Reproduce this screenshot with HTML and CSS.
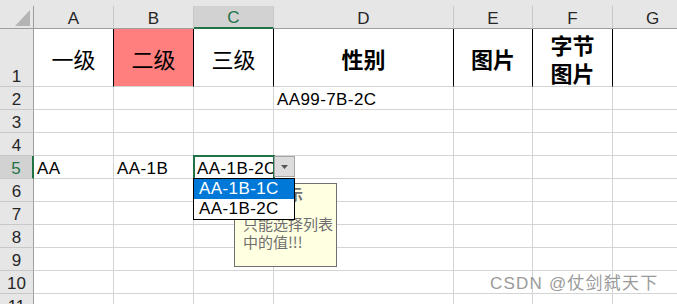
FILE: index.html
```html
<!doctype html>
<html lang="zh-CN">
  <head>
    <meta charset="UTF-8" />
    <meta name="viewport" content="width=device-width, initial-scale=1.0" />
    <title>Sheet1</title>
    <link rel="stylesheet" href="styles.css">
  </head>
  <body>
    <div class="topbar"></div>
    <div class="sheet">
      <!-- column headers -->
      <div class="c h col corner">
        <svg width="15" height="16" viewBox="0 0 15 16"><path d="M15 0V16H0Z" fill="#b4b4b4" /></svg>
      </div>
      <div class="c h col">A</div>
      <div class="c h col">B</div>
      <div class="c h col sel">C</div>
      <div class="c h col">D</div>
      <div class="c h col">E</div>
      <div class="c h col">F</div>
      <div class="c h col">G</div>

      <!-- row 1 -->
      <div class="c h rh">1</div>
      <div class="c title">一级</div>
      <div class="c title red">二级</div>
      <div class="c title">三级</div>
      <div class="c title bold">性别</div>
      <div class="c title bold">图片</div>
      <div class="c title bold">字节<br>图片</div>
      <div class="c"></div>

      <!-- row 2 -->
      <div class="c h rh">2</div>
      <div class="c"></div><div class="c"></div><div class="c"></div>
      <div class="c">AA99-7B-2C</div>
      <div class="c"></div><div class="c"></div><div class="c"></div>

      <!-- row 3 -->
      <div class="c h rh">3</div>
      <div class="c"></div><div class="c"></div><div class="c"></div><div class="c"></div>
      <div class="c"></div><div class="c"></div><div class="c"></div>

      <!-- row 4 -->
      <div class="c h rh">4</div>
      <div class="c"></div><div class="c"></div><div class="c"></div><div class="c"></div>
      <div class="c"></div><div class="c"></div><div class="c"></div>

      <!-- row 5, active cell C5 with validation list -->
      <div class="c h rh sel">5</div>
      <div class="c">AA</div>
      <div class="c">AA-1B</div>
      <div class="c active">
        <span class="clip">AA-1B-2C</span>
        <div class="drop-btn">
          <svg width="7" height="4" viewBox="0 0 7 4"><path d="M0 0H7L3.5 4Z" fill="#555" /></svg>
        </div>
        <div class="tip">
          <div class="tip-title">温馨提示</div>
          <div class="tip-msg">只能选择列表<br>中的值!!!</div>
        </div>
        <div class="drop-list">
          <div class="on">AA-1B-1C</div>
          <div>AA-1B-2C</div>
        </div>
      </div>
      <div class="c"></div><div class="c"></div><div class="c"></div><div class="c"></div>

      <!-- rows 6-11 -->
      <div class="c h rh">6</div>
      <div class="c"></div><div class="c"></div><div class="c"></div><div class="c"></div>
      <div class="c"></div><div class="c"></div><div class="c"></div>

      <div class="c h rh">7</div>
      <div class="c"></div><div class="c"></div><div class="c"></div><div class="c"></div>
      <div class="c"></div><div class="c"></div><div class="c"></div>

      <div class="c h rh">8</div>
      <div class="c"></div><div class="c"></div><div class="c"></div><div class="c"></div>
      <div class="c"></div><div class="c"></div><div class="c"></div>

      <div class="c h rh">9</div>
      <div class="c"></div><div class="c"></div><div class="c"></div><div class="c"></div>
      <div class="c"></div><div class="c"></div><div class="c"></div>

      <div class="c h rh">10</div>
      <div class="c"></div><div class="c"></div><div class="c"></div><div class="c"></div>
      <div class="c"></div><div class="c"></div><div class="c"></div>

      <div class="c h rh">11</div>
      <div class="c"></div><div class="c"></div><div class="c"></div><div class="c"></div>
      <div class="c"></div><div class="c"></div><div class="c"></div>
    </div>

    <div class="watermark">CSDN @仗剑弑天下</div>
  </body>
</html>
```

FILE: styles.css
```css
body {
  margin: 0;
  overflow: hidden;
  background-color: #fff;
  font-family: "Liberation Sans", "Noto Sans CJK SC", sans-serif;
  color: #000;
}

.topbar {
  height: 6px;
  background-color: #e6e6e6;
}

.sheet {
  display: grid;
  grid-template-columns: 34px 80px 80px 80px 180px 79px 80px 80px;
  grid-template-rows: 23px 58px;
  grid-auto-rows: 23px;
  width: 693px;
}

.c {
  box-sizing: border-box;
  min-width: 0;
  display: flex;
  align-items: flex-end;
  padding-left: 3px;
  border-right: 1px solid #d4d4d4;
  border-bottom: 1px solid #d4d4d4;
  font-size: 17px;
  line-height: 18px;
  letter-spacing: 0.4px;
  white-space: nowrap;
  overflow: hidden;
}

/* headers */
.h {
  justify-content: center;
  padding-left: 0;
  background-color: #e6e6e6;
  border-color: #c8c8c8;
  color: #262626;
  letter-spacing: 0;
}

.col {
  border-bottom-color: #9e9e9e;
}

.rh {
  border-right-color: #9e9e9e;
}

.corner {
  justify-content: flex-end;
  padding: 0 3px 2px 0;
  border-right-color: #9e9e9e;
}

.sel {
  background-color: #d2d2d2;
  color: #217346;
}

.col.sel {
  border-bottom: 2px solid #217346;
}

.rh.sel {
  border-right: 2px solid #217346;
}

/* row 1 titles */
.title {
  justify-content: center;
  align-items: center;
  padding-left: 0;
  border-right-color: #000;
  font-family: "Noto Sans CJK SC", sans-serif;
  font-size: 22px;
  line-height: 28px;
  letter-spacing: 0;
  text-align: center;
  white-space: normal;
}

.bold {
  font-weight: 700;
}

.red {
  background-color: #ff7f7f;
}

/* active cell */
.active {
  position: relative;
  z-index: 2;
  overflow: visible;
  outline: 2px solid #217346;
  outline-offset: -1px;
}

.active .clip {
  display: block;
  width: 100%;
  overflow: hidden;
}

.drop-btn {
  position: absolute;
  left: 80px;
  top: 0;
  width: 21px;
  height: 21px;
  box-sizing: border-box;
  display: flex;
  align-items: center;
  justify-content: center;
  background-color: #dcdcdc;
  border: 1px solid #a6a6a6;
}

.drop-list {
  position: absolute;
  left: -1px;
  top: 22px;
  z-index: 3;
  width: 102px;
  box-sizing: border-box;
  background-color: #fff;
  border: 1px solid #000;
}

.drop-list div {
  height: 20px;
  line-height: 20px;
  padding-left: 5px;
}

.drop-list .on {
  background-color: #0078d7;
  color: #fff;
}

.tip {
  position: absolute;
  left: 40px;
  top: 27px;
  z-index: 1;
  width: 103px;
  height: 84px;
  box-sizing: border-box;
  padding: 1px 0 0 8px;
  background-color: #ffffe1;
  border: 1px solid #707070;
  color: #6e6e6e;
  font-family: "Noto Sans CJK SC", sans-serif;
  font-size: 15px;
  line-height: 18px;
  letter-spacing: 0;
  white-space: normal;
}

.tip-title {
  font-weight: 700;
}

.tip-msg {
  margin-top: 12px;
}

.watermark {
  position: absolute;
  left: 490px;
  top: 274px;
  z-index: 5;
  color: #9a9a9a;
  font-size: 17px;
  line-height: 20px;
  letter-spacing: 1.2px;
  text-shadow: 0 0 2px #fff, 0 0 1px #fff;
  white-space: nowrap;
}
```
